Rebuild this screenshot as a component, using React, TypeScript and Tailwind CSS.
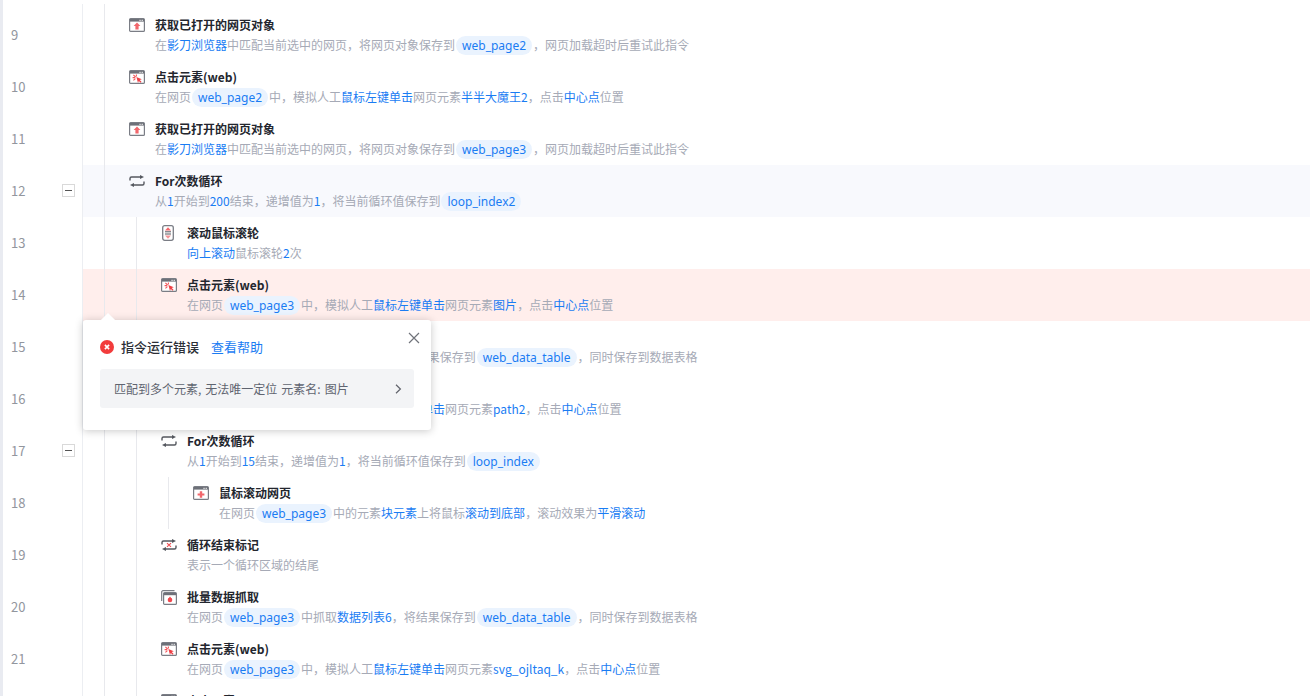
import { ReactNode } from "react";

const sans = "font-['Noto_Sans_CJK_SC','Noto_Sans',sans-serif]";

function WindowFrame({ children }: { children: ReactNode }) {
  return (
    <svg width="16" height="14" viewBox="0 0 16 14" fill="none">
      <rect x="0.6" y="0.6" width="14.8" height="12.8" rx="1" fill="#fff" stroke="#7a7d85" strokeWidth="1.2" />
      <path d="M1 1h14v2.6H1z" fill="#6d7078" />
      <rect x="10.4" y="1.8" width="1.3" height="1" fill="#fff" />
      <rect x="12.6" y="1.8" width="1.3" height="1" fill="#fff" />
      {children}
    </svg>
  );
}

const WebGetIcon = () => (
  <WindowFrame>
    <path d="M8 4.6 11.4 8H9.6v3.4H6.4V8H4.6z" fill="#f2676c" />
  </WindowFrame>
);

const WebClickIcon = () => (
  <WindowFrame>
    <path d="M4.4 4.8 6.6 7M3.6 7.6h2.6M4.4 10.4 6.4 8.6M7.4 4.4v2" stroke="#f2565b" strokeWidth="1.1" />
    <path d="M7.4 7 12.8 9.2l-2.1.8 1.8 1.8-.9.9-1.8-1.8-.8 2.1z" fill="#ee3f45" />
  </WindowFrame>
);

const WebScrollIcon = () => (
  <WindowFrame>
    <path d="M6.8 5.2h2.4v2.2h2.2v2.2H9.2v2.2H6.8V9.6H4.6V7.4h2.2z" fill="#f2676c" />
  </WindowFrame>
);

const BatchIcon = () => (
  <svg width="16" height="15" viewBox="0 0 16 15" fill="none">
    <path d="M0.7 11V2A1.3 1.3 0 0 1 2 .7h11.5" stroke="#7a7d85" strokeWidth="1.2" />
    <rect x="2.6" y="2.6" width="12.8" height="11.8" rx="1" fill="#fff" stroke="#7a7d85" strokeWidth="1.2" />
    <path d="M3 3h12v2.2H3z" fill="#6d7078" />
    <circle cx="9" cy="10" r="2.3" fill="#f0484e" />
    <path d="M9 6.6 11.2 9.4H6.8z" fill="#f0484e" />
  </svg>
);

const LoopIcon = () => (
  <svg width="16" height="12" viewBox="0 0 16 12" fill="none" stroke="#55585f" strokeWidth="1.4">
    <path d="M1 5.6V3.5A1.5 1.5 0 0 1 2.5 2H12" />
    <path d="M15 6.4v2.1A1.5 1.5 0 0 1 13.5 10H4" />
    <path d="M11 0v4l4-2z" fill="#55585f" stroke="none" />
    <path d="M5 8v4l-4-2z" fill="#55585f" stroke="none" />
  </svg>
);

const LoopEndIcon = () => (
  <svg width="16" height="12" viewBox="0 0 16 12" fill="none" stroke="#55585f" strokeWidth="1.4">
    <path d="M1 5.6V3.5A1.5 1.5 0 0 1 2.5 2H12" />
    <path d="M15 6.4v2.1A1.5 1.5 0 0 1 13.5 10H4" />
    <path d="M11 0v4l4-2z" fill="#55585f" stroke="none" />
    <path d="M5 8v4l-4-2z" fill="#55585f" stroke="none" />
    <path d="M6 4.2 10 7.8M10 4.2 6 7.8" stroke="#f0484e" strokeWidth="1.1" />
  </svg>
);

const ScrollIcon = () => (
  <svg className="ml-px" width="12" height="16" viewBox="0 0 12 16" fill="none">
    <rect x="0.7" y="0.7" width="10.6" height="14.6" rx="2" fill="#fff" stroke="#7a7d85" strokeWidth="1.3" />
    <path d="M6 2.2 9 5.4H3z" fill="#f2676c" />
    <path d="M6 13.8 9 10.6H3z" fill="#f59497" />
    <path d="M3 6.8h6M3 9h6" stroke="#55585f" strokeWidth="1" />
  </svg>
);

const Hl = ({ children }: { children: ReactNode }) => <span className="text-[#1a7cf3]">{children}</span>;

const Pill = ({ children }: { children: ReactNode }) => (
  <span className="mx-px inline-block h-[19px] rounded-full bg-[#eaf3fe] px-[6px] leading-[19px] text-[#1a7cf3] font-['Noto_Sans','Noto_Sans_CJK_SC',sans-serif]">
    {children}
  </span>
);

const clickDesc = (page: string, el: string) => (
  <>
    在网页<Pill>{page}</Pill>中，模拟人工<Hl>鼠标左键单击</Hl>网页元素<Hl>{el}</Hl>，点击<Hl>中心点</Hl>位置
  </>
);

const getDesc = (page: string) => (
  <>
    在<Hl>影刀浏览器</Hl>中匹配当前选中的网页，将网页对象保存到<Pill>{page}</Pill>，网页加载超时后重试此指令
  </>
);

const batchDesc = (
  <>
    在网页<Pill>web_page3</Pill>中抓取<Hl>数据列表6</Hl>，将结果保存到<Pill>web_data_table</Pill>，同时保存到数据表格
  </>
);

const loopDesc = (end: string, name: string) => (
  <>
    从<Hl>1</Hl>开始到<Hl>{end}</Hl>结束，递增值为<Hl>1</Hl>，将当前循环值保存到<Pill>{name}</Pill>
  </>
);

type Row = {
  no: number;
  level: number;
  icon: ReactNode;
  title: string;
  desc: ReactNode;
  collapse?: boolean;
  bg?: string;
};

const rows: Row[] = [
  { no: 9, level: 1, icon: <WebGetIcon />, title: "获取已打开的网页对象", desc: getDesc("web_page2") },
  { no: 10, level: 1, icon: <WebClickIcon />, title: "点击元素(web)", desc: clickDesc("web_page2", "半半大魔王2") },
  { no: 11, level: 1, icon: <WebGetIcon />, title: "获取已打开的网页对象", desc: getDesc("web_page3") },
  { no: 12, level: 1, icon: <LoopIcon />, title: "For次数循环", desc: loopDesc("200", "loop_index2"), collapse: true, bg: "bg-[#f8f9fd]" },
  {
    no: 13,
    level: 2,
    icon: <ScrollIcon />,
    title: "滚动鼠标滚轮",
    desc: (
      <>
        <Hl>向上滚动</Hl>鼠标滚轮<Hl>2</Hl>次
      </>
    ),
  },
  { no: 14, level: 2, icon: <WebClickIcon />, title: "点击元素(web)", desc: clickDesc("web_page3", "图片"), bg: "bg-[#ffeeec]" },
  { no: 15, level: 2, icon: <BatchIcon />, title: "批量数据抓取", desc: batchDesc },
  { no: 16, level: 2, icon: <WebClickIcon />, title: "点击元素(web)", desc: clickDesc("web_page3", "path2") },
  { no: 17, level: 2, icon: <LoopIcon />, title: "For次数循环", desc: loopDesc("15", "loop_index"), collapse: true },
  {
    no: 18,
    level: 3,
    icon: <WebScrollIcon />,
    title: "鼠标滚动网页",
    desc: (
      <>
        在网页<Pill>web_page3</Pill>中的元素<Hl>块元素</Hl>上将鼠标<Hl>滚动到底部</Hl>，滚动效果为<Hl>平滑滚动</Hl>
      </>
    ),
  },
  { no: 19, level: 2, icon: <LoopEndIcon />, title: "循环结束标记", desc: "表示一个循环区域的结尾" },
  { no: 20, level: 2, icon: <BatchIcon />, title: "批量数据抓取", desc: batchDesc },
  { no: 21, level: 2, icon: <WebClickIcon />, title: "点击元素(web)", desc: clickDesc("web_page3", "svg_ojltaq_k") },
  { no: 22, level: 2, icon: <WebGetIcon />, title: "点击元素(web)", desc: clickDesc("web_page3", "图片") },
];

function CommandRow({ row }: { row: Row }) {
  return (
    <div className="flex h-[52px]">
      <div className="relative flex w-[80px] shrink-0 items-center border-r border-[#eceef2] pl-[8px]">
        <span className="text-[13px] text-[#92969e]">{row.no}</span>
        {row.collapse && (
          <span className="absolute left-[59px] top-[19px] flex h-[13px] w-[13px] items-center justify-center border border-[#d9d9d9] bg-white">
            <span className="h-px w-[7px] bg-[#555]" />
          </span>
        )}
      </div>
      <div className={`flex flex-1 ${row.bg ?? ""}`}>
        <div className="w-[22px] shrink-0 border-r border-[#e8e9ed]" />
        {row.level >= 2 && <div className="w-[32px] shrink-0 border-r border-[#e8e9ed]" />}
        {row.level >= 3 && <div className="w-[32px] shrink-0 border-r border-[#e8e9ed]" />}
        <div className="ml-[24px] flex flex-col pt-[6px]">
          <div className="flex h-[20px] items-center">
            <span className="flex w-[26px] shrink-0 justify-start">{row.icon}</span>
            <span className="text-[12px] font-semibold text-[#23262e]">{row.title}</span>
          </div>
          <div className="flex h-[20px] items-center whitespace-nowrap pl-[26px] text-[12px] text-[#a6aab6]">
            <span>{row.desc}</span>
          </div>
        </div>
      </div>
    </div>
  );
}

function ErrorPopover() {
  return (
    <div className="absolute left-[80px] top-[320px] h-[110px] w-[348px] rounded-[3px] bg-white shadow-[0_1px_8px_rgba(0,0,0,0.22)]">
      <span className="absolute left-[20px] top-[-5px] h-[10px] w-[10px] rotate-45 bg-white" />
      <div className="relative flex items-center pl-[17px] pt-[17px]">
        <svg width="14" height="14" viewBox="0 0 14 14">
          <circle cx="7" cy="7" r="7" fill="#f23c3c" />
          <path d="M4.9 4.9 9.1 9.1M9.1 4.9 4.9 9.1" stroke="#fff" strokeWidth="1.6" />
        </svg>
        <span className="ml-[7px] text-[13px] font-medium leading-[20px] text-[#2b2e36]">指令运行错误</span>
        <span className="ml-[12px] text-[13px] leading-[20px] text-[#1a7cf3]">查看帮助</span>
      </div>
      <svg className="absolute left-[325px] top-[12px]" width="12" height="12" viewBox="0 0 12 12" fill="none" stroke="#70737a" strokeWidth="1.2">
        <path d="M1 1l10 10M11 1 1 11" />
      </svg>
      <div className="mx-[17px] mt-[12px] flex h-[39px] items-center justify-between rounded-[3px] bg-[#f3f4f6] pl-[14px] pr-[12px] text-[12px] text-[#5f6470] [word-spacing:1.3px]">
        <span>匹配到多个元素, 无法唯一定位 元素名: 图片</span>
        <svg width="7" height="10" viewBox="0 0 7 10" fill="none" stroke="#60636b" strokeWidth="1.2">
          <path d="M1 0.8 5.4 5 1 9.2" />
        </svg>
      </div>
    </div>
  );
}

export default function App() {
  return (
    <div className={`relative h-[696px] overflow-hidden border-l-[3px] border-[#e9ebf1] bg-white ${sans}`}>
      <div className="flex h-[5px]">
        <div className="mt-[4px] w-[80px] border-r border-[#eceef2]" />
        <div className="mt-[4px] w-[22px] border-r border-[#e8e9ed]" />
      </div>
      <div className="flex h-[4px]">
        <div className="w-[80px] border-r border-[#eceef2]" />
        <div className="w-[22px] border-r border-[#e8e9ed]" />
      </div>
      {rows.map((row) => (
        <CommandRow key={row.no} row={row} />
      ))}
      <ErrorPopover />
    </div>
  );
}
